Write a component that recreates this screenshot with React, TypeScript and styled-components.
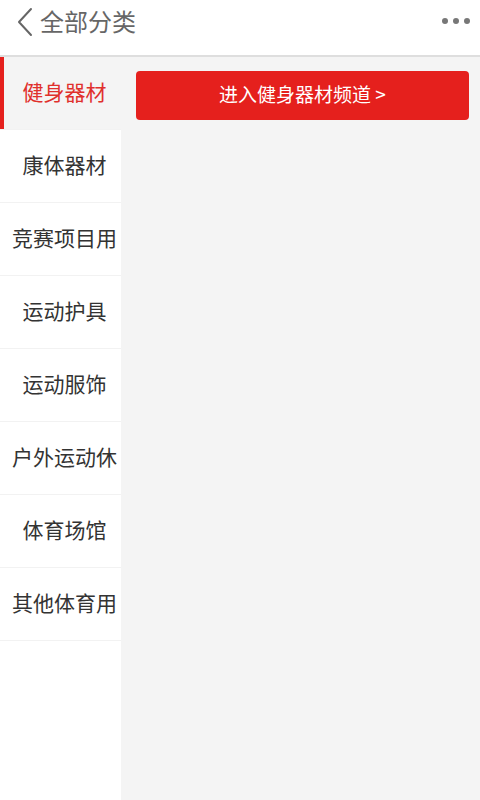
import React, { useState } from "react";
import styled, { createGlobalStyle } from "styled-components";

const GlobalStyle = createGlobalStyle`
  html, body {
    margin: 0;
    padding: 0;
    height: 100%;
    background: #ffffff;
    font-family: "Noto Sans CJK SC", "Noto Sans", sans-serif;
  }
  #root {
    height: 100%;
  }
`;

const Page = styled.div`
  display: flex;
  flex-direction: column;
  height: 800px;
  overflow: hidden;
`;

const Header = styled.header`
  flex: none;
  height: 55px;
  display: flex;
  align-items: center;
  padding: 0 10px 0 16px;
  border-bottom: 2px solid #dedede;
  background: #ffffff;
`;

const BackButton = styled.button`
  display: flex;
  align-items: center;
  border: none;
  background: none;
  padding: 0;
  margin-right: 6px;
  margin-top: -12px;
  cursor: pointer;
`;

const Title = styled.h1`
  flex: 1;
  margin: 0;
  font-size: 24px;
  font-weight: 400;
  color: #666666;
  line-height: 1;
  margin-top: -14px;
`;

const MoreButton = styled.button`
  display: flex;
  gap: 5px;
  border: none;
  background: none;
  padding: 0;
  margin-top: -14px;
  cursor: pointer;
`;

const Dot = styled.span`
  width: 6px;
  height: 6px;
  border-radius: 50%;
  background: #777777;
`;

const Body = styled.div`
  flex: 1;
  display: flex;
  min-height: 0;
`;

const Sidebar = styled.nav`
  flex: none;
  width: 121px;
  background: #ffffff;
  overflow: hidden;
`;

const CategoryItem = styled.div<{ $active: boolean }>`
  height: 73px;
  box-sizing: border-box;
  display: flex;
  align-items: center;
  justify-content: center;
  padding: 0 0 5px 8px;
  white-space: nowrap;
  font-size: 21px;
  color: ${(p) => (p.$active ? "#e0302c" : "#333333")};
  background: ${(p) => (p.$active ? "#f4f4f4" : "#ffffff")};
  box-shadow: ${(p) => (p.$active ? "inset 4px 0 0 #e5201d" : "none")};
  border-bottom: 1px solid #f2f2f2;
  cursor: pointer;
`;

const Content = styled.main`
  flex: 1;
  background: #f4f4f4;
  padding: 14px 11px 0 15px;
`;

const ChannelButton = styled.button`
  width: 100%;
  height: 49px;
  padding: 0 0 5px;
  border: none;
  border-radius: 4px;
  background: #e5201d;
  color: #ffffff;
  font-family: "Noto Sans CJK SC", "Noto Sans", sans-serif;
  font-size: 19px;
  cursor: pointer;
`;

const categories = [
  "健身器材",
  "康体器材",
  "竞赛项目用",
  "运动护具",
  "运动服饰",
  "户外运动休",
  "体育场馆",
  "其他体育用",
];

export default function App() {
  const [active, setActive] = useState(0);

  return (
    <>
      <GlobalStyle />
      <Page>
        <Header>
          <BackButton aria-label="返回">
            <svg width="18" height="30" viewBox="0 0 18 30">
              <path d="M15 2 L3 15 L15 28" fill="none" stroke="#666" strokeWidth="2" strokeLinecap="round" strokeLinejoin="round" />
            </svg>
          </BackButton>
          <Title>全部分类</Title>
          <MoreButton aria-label="更多">
            <Dot />
            <Dot />
            <Dot />
          </MoreButton>
        </Header>
        <Body>
          <Sidebar>
            {categories.map((name, i) => (
              <CategoryItem key={name} $active={i === active} onClick={() => setActive(i)}>
                {name}
              </CategoryItem>
            ))}
          </Sidebar>
          <Content>
            <ChannelButton>进入{categories[active]}频道 &gt;</ChannelButton>
          </Content>
        </Body>
      </Page>
    </>
  );
}
